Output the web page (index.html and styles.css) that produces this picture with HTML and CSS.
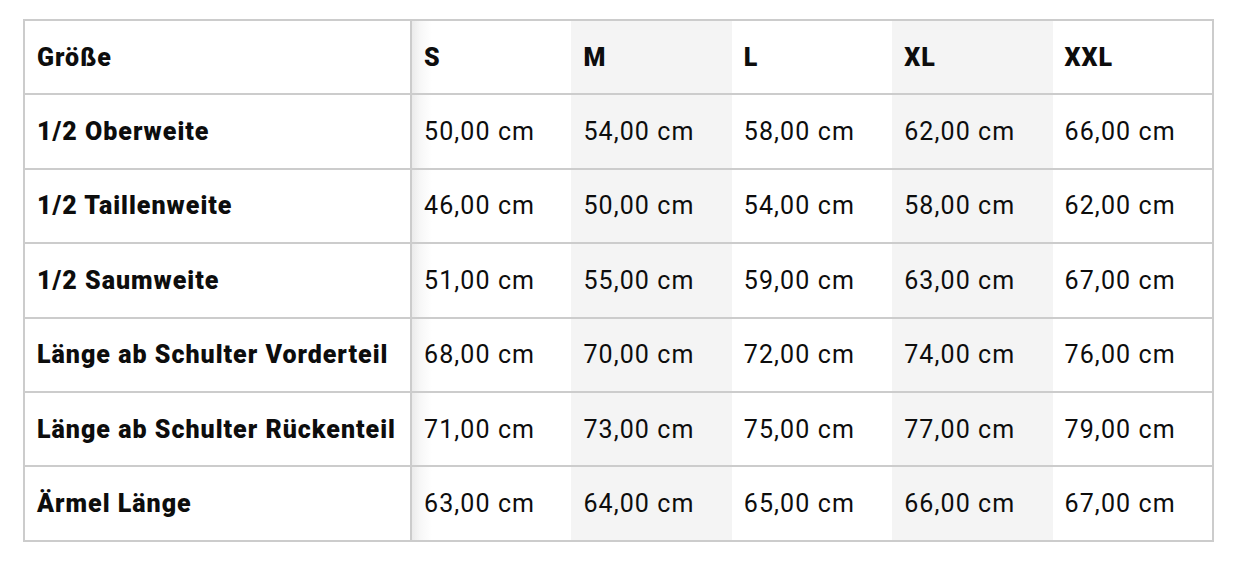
FILE: index.html
```html
<!DOCTYPE html>
<html lang="de">
<head>
<meta charset="utf-8">
<title>Größentabelle</title>
<link rel="stylesheet" href="styles.css">
</head>
<body>
<div class="wrap">
<table class="size-table">
  <colgroup>
    <col class="c-label">
    <col class="c-size">
    <col class="c-size alt">
    <col class="c-size">
    <col class="c-size alt">
    <col class="c-size">
  </colgroup>
  <thead>
    <tr>
      <th class="label">Größe</th>
      <th class="first">S</th>
      <th class="alt">M</th>
      <th>L</th>
      <th class="alt">XL</th>
      <th>XXL</th>
    </tr>
  </thead>
  <tbody>
    <tr>
      <th class="label">1/2 Oberweite</th>
      <td class="first">50,00 cm</td><td class="alt">54,00 cm</td><td>58,00 cm</td><td class="alt">62,00 cm</td><td>66,00 cm</td>
    </tr>
    <tr>
      <th class="label">1/2 Taillenweite</th>
      <td class="first">46,00 cm</td><td class="alt">50,00 cm</td><td>54,00 cm</td><td class="alt">58,00 cm</td><td>62,00 cm</td>
    </tr>
    <tr>
      <th class="label">1/2 Saumweite</th>
      <td class="first">51,00 cm</td><td class="alt">55,00 cm</td><td>59,00 cm</td><td class="alt">63,00 cm</td><td>67,00 cm</td>
    </tr>
    <tr>
      <th class="label">Länge ab Schulter Vorderteil</th>
      <td class="first">68,00 cm</td><td class="alt">70,00 cm</td><td>72,00 cm</td><td class="alt">74,00 cm</td><td>76,00 cm</td>
    </tr>
    <tr>
      <th class="label">Länge ab Schulter Rückenteil</th>
      <td class="first">71,00 cm</td><td class="alt">73,00 cm</td><td>75,00 cm</td><td class="alt">77,00 cm</td><td>79,00 cm</td>
    </tr>
    <tr>
      <th class="label">Ärmel Länge</th>
      <td class="first">63,00 cm</td><td class="alt">64,00 cm</td><td>65,00 cm</td><td class="alt">66,00 cm</td><td>67,00 cm</td>
    </tr>
  </tbody>
</table>
</div>
</body>
</html>
```
FILE: styles.css
```css
html, body {
  margin: 0;
  padding: 0;
  background: #ffffff;
}

body {
  font-family: Roboto, "Liberation Sans", sans-serif;
  color: #0d0d0d;
}

.wrap {
  padding: 19px 0 0 23px;
}

.size-table {
  border-collapse: collapse;
  table-layout: fixed;
  width: 1191px;
  border: 2px solid #cccccc;
}

.c-label {
  width: 387px;
}

.size-table th,
.size-table td {
  height: 72.4px;
  padding: 0 12px;
  text-align: left;
  vertical-align: middle;
  border-top: 2px solid #cccccc;
  border-bottom: 2px solid #cccccc;
  font-size: 25px;
  letter-spacing: 1.1px;
  white-space: nowrap;
}

.size-table th {
  font-weight: 900;
  letter-spacing: 1px;
}

.size-table td {
  font-weight: 400;
}

.size-table .label {
  border-right: 2px solid #cccccc;
}

.size-table .alt {
  background: #f4f4f4;
}

.size-table .first {
  background: linear-gradient(to right, #ebebeb 0px, #f7f7f7 8px, #ffffff 20px);
}
```
